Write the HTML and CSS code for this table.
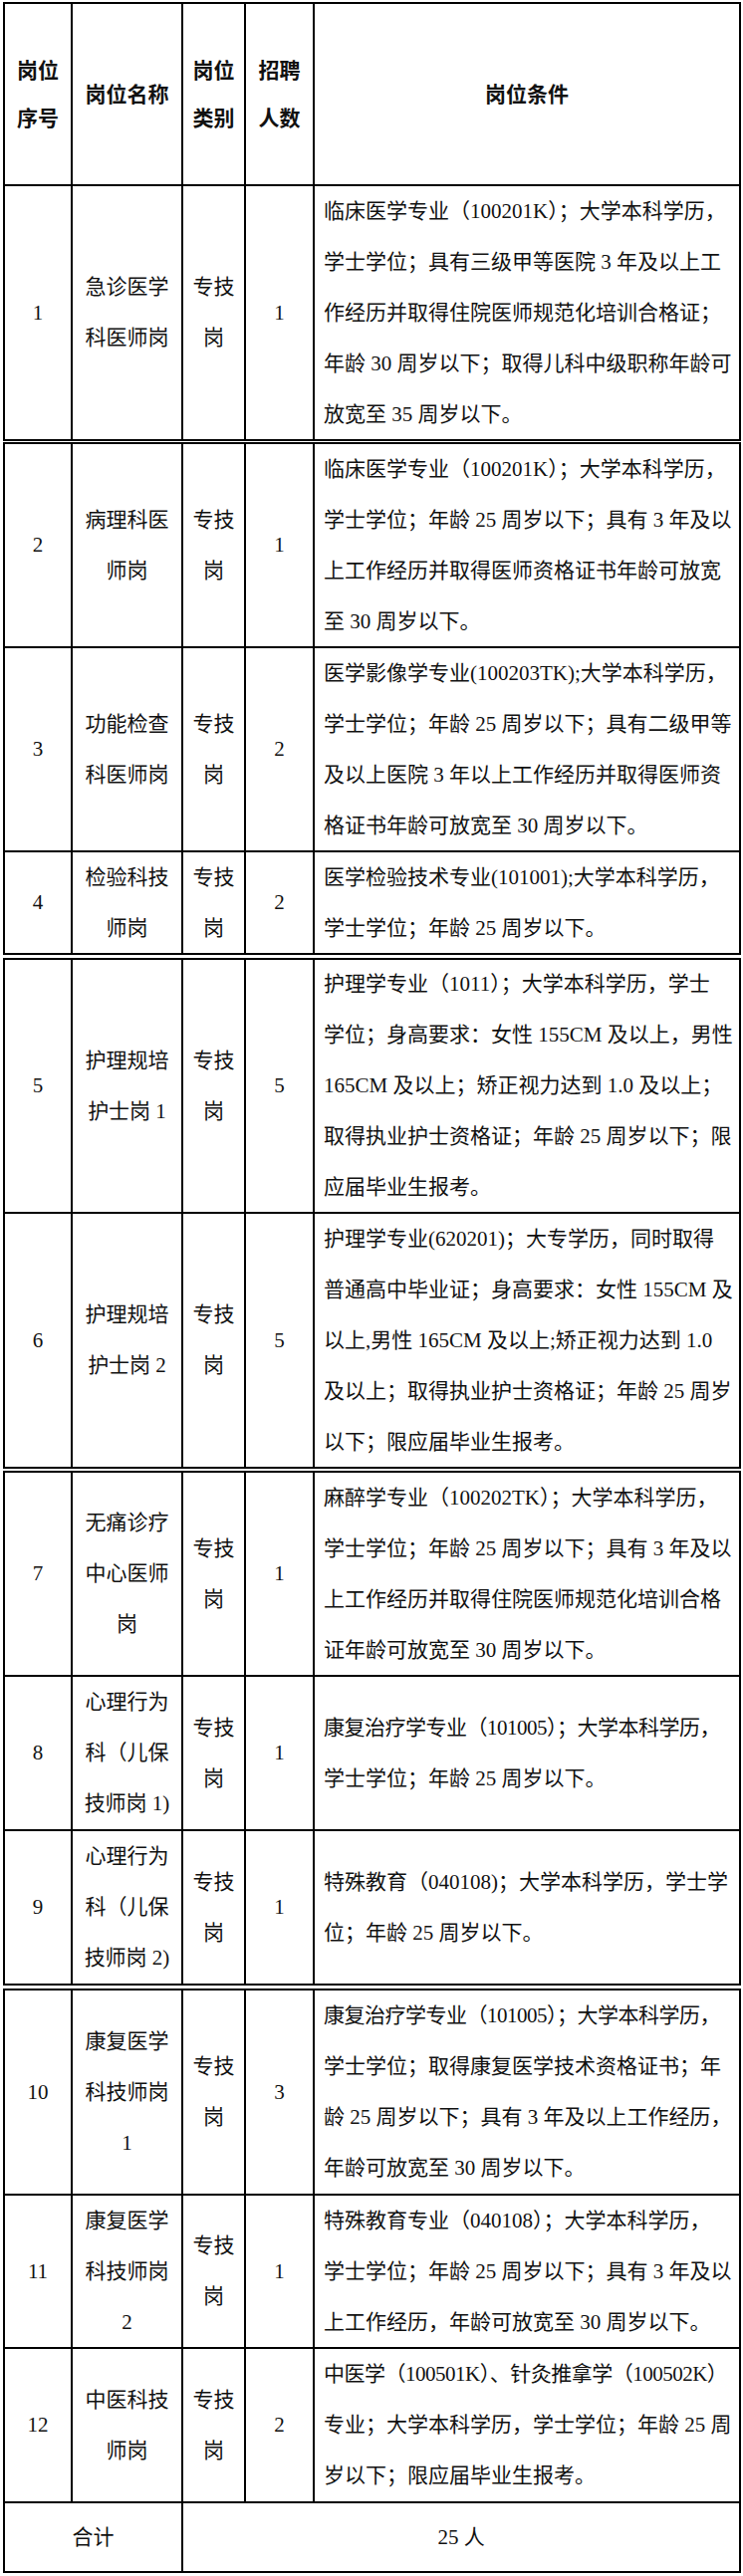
FILE: index.html
```html
<!DOCTYPE html>
<html lang="zh-CN">
<head>
<meta charset="utf-8">
<title>岗位表</title>
<link rel="stylesheet" href="styles.css">
</head>
<body>
<div class="sheet">

  <div class="seg seg-a">
    <div class="hd"><span>岗位</span><span>序号</span></div>
    <div class="hd"><span>岗位名称</span></div>
    <div class="hd"><span>岗位</span><span>类别</span></div>
    <div class="hd"><span>招聘</span><span>人数</span></div>
    <div class="hd"><span>岗位条件</span></div>

    <div><span>1</span></div>
    <div><span>急诊医学</span><span>科医师岗</span></div>
    <div><span>专技</span><span>岗</span></div>
    <div><span>1</span></div>
    <div class="cond">
      <span>临床医学专业（100201K）；大学本科学历，</span>
      <span>学士学位；具有三级甲等医院 3 年及以上工</span>
      <span>作经历并取得住院医师规范化培训合格证；</span>
      <span>年龄 30 周岁以下；取得儿科中级职称年龄可</span>
      <span>放宽至 35 周岁以下。</span>
    </div>
  </div>

  <div class="seg seg-b">
    <div><span>2</span></div>
    <div><span>病理科医</span><span>师岗</span></div>
    <div><span>专技</span><span>岗</span></div>
    <div><span>1</span></div>
    <div class="cond">
      <span>临床医学专业（100201K）；大学本科学历，</span>
      <span>学士学位；年龄 25 周岁以下；具有 3 年及以</span>
      <span>上工作经历并取得医师资格证书年龄可放宽</span>
      <span>至 30 周岁以下。</span>
    </div>

    <div><span>3</span></div>
    <div><span>功能检查</span><span>科医师岗</span></div>
    <div><span>专技</span><span>岗</span></div>
    <div><span>2</span></div>
    <div class="cond">
      <span>医学影像学专业(100203TK);大学本科学历，</span>
      <span>学士学位；年龄 25 周岁以下；具有二级甲等</span>
      <span>及以上医院 3 年以上工作经历并取得医师资</span>
      <span>格证书年龄可放宽至 30 周岁以下。</span>
    </div>

    <div><span>4</span></div>
    <div><span>检验科技</span><span>师岗</span></div>
    <div><span>专技</span><span>岗</span></div>
    <div><span>2</span></div>
    <div class="cond">
      <span>医学检验技术专业(101001);大学本科学历，</span>
      <span>学士学位；年龄 25 周岁以下。</span>
    </div>
  </div>

  <div class="seg seg-c">
    <div><span>5</span></div>
    <div><span>护理规培</span><span>护士岗 1</span></div>
    <div><span>专技</span><span>岗</span></div>
    <div><span>5</span></div>
    <div class="cond">
      <span>护理学专业（1011）；大学本科学历，学士</span>
      <span>学位；身高要求：女性 155CM 及以上，男性</span>
      <span>165CM 及以上；矫正视力达到 1.0 及以上；</span>
      <span>取得执业护士资格证；年龄 25 周岁以下；限</span>
      <span>应届毕业生报考。</span>
    </div>

    <div><span>6</span></div>
    <div><span>护理规培</span><span>护士岗 2</span></div>
    <div><span>专技</span><span>岗</span></div>
    <div><span>5</span></div>
    <div class="cond">
      <span>护理学专业(620201)；大专学历，同时取得</span>
      <span>普通高中毕业证；身高要求：女性 155CM 及</span>
      <span>以上,男性 165CM 及以上;矫正视力达到 1.0</span>
      <span>及以上；取得执业护士资格证；年龄 25 周岁</span>
      <span>以下；限应届毕业生报考。</span>
    </div>
  </div>

  <div class="seg seg-d">
    <div><span>7</span></div>
    <div><span>无痛诊疗</span><span>中心医师</span><span>岗</span></div>
    <div><span>专技</span><span>岗</span></div>
    <div><span>1</span></div>
    <div class="cond">
      <span>麻醉学专业（100202TK）；大学本科学历，</span>
      <span>学士学位；年龄 25 周岁以下；具有 3 年及以</span>
      <span>上工作经历并取得住院医师规范化培训合格</span>
      <span>证年龄可放宽至 30 周岁以下。</span>
    </div>

    <div><span>8</span></div>
    <div><span>心理行为</span><span>科（儿保</span><span>技师岗 1)</span></div>
    <div><span>专技</span><span>岗</span></div>
    <div><span>1</span></div>
    <div class="cond">
      <span class="tight">康复治疗学专业（101005）；大学本科学历，</span>
      <span>学士学位；年龄 25 周岁以下。</span>
    </div>

    <div><span>9</span></div>
    <div><span>心理行为</span><span>科（儿保</span><span>技师岗 2)</span></div>
    <div><span>专技</span><span>岗</span></div>
    <div><span>1</span></div>
    <div class="cond">
      <span>特殊教育（040108)；大学本科学历，学士学</span>
      <span>位；年龄 25 周岁以下。</span>
    </div>
  </div>

  <div class="seg seg-e">
    <div><span>10</span></div>
    <div><span>康复医学</span><span>科技师岗</span><span>1</span></div>
    <div><span>专技</span><span>岗</span></div>
    <div><span>3</span></div>
    <div class="cond">
      <span class="tight">康复治疗学专业（101005）；大学本科学历，</span>
      <span>学士学位；取得康复医学技术资格证书；年</span>
      <span>龄 25 周岁以下；具有 3 年及以上工作经历，</span>
      <span>年龄可放宽至 30 周岁以下。</span>
    </div>

    <div><span>11</span></div>
    <div><span>康复医学</span><span>科技师岗</span><span>2</span></div>
    <div><span>专技</span><span>岗</span></div>
    <div><span>1</span></div>
    <div class="cond">
      <span>特殊教育专业（040108）；大学本科学历，</span>
      <span>学士学位；年龄 25 周岁以下；具有 3 年及以</span>
      <span>上工作经历，年龄可放宽至 30 周岁以下。</span>
    </div>

    <div><span>12</span></div>
    <div><span>中医科技</span><span>师岗</span></div>
    <div><span>专技</span><span>岗</span></div>
    <div><span>2</span></div>
    <div class="cond">
      <span class="tight">中医学（100501K）、针灸推拿学（100502K）</span>
      <span>专业；大学本科学历，学士学位；年龄 25 周</span>
      <span>岁以下；限应届毕业生报考。</span>
    </div>

    <div class="span-2"><span>合计</span></div>
    <div class="span-3"><span>25 人</span></div>
  </div>

</div>
</body>
</html>
```

FILE: styles.css
```css
html, body {
  margin: 0;
  padding: 0;
  background: #ffffff;
}

body {
  font-family: "Liberation Serif", "Noto Sans CJK SC", serif;
  font-size: 21px;
  color: #111111;
}

.sheet {
  padding: 2px 0 0 3px;
  display: flex;
  flex-direction: column;
  align-items: flex-start;
}

.seg {
  display: grid;
  grid-template-columns: 68px 111px 63px 69px 428px;
  border-left: 2px solid #000;
  border-top: 2px solid #000;
}

.seg > div {
  border-right: 2px solid #000;
  border-bottom: 2px solid #000;
  display: flex;
  flex-direction: column;
  justify-content: center;
  align-items: center;
  line-height: 51px;
  white-space: nowrap;
  overflow: visible;
}

.seg-a { grid-template-rows: 183px 256px; }
.seg-b { margin-top: 1px; grid-template-rows: 205px 205px 103px; }
.seg-c { margin-top: 3px; grid-template-rows: 255px 256px; }
.seg-d { margin-top: 2px; grid-template-rows: 205px 155px 155px; }
.seg-e { margin-top: 3px; grid-template-rows: 206px 154px 155px 70px; }

.seg > .hd {
  font-weight: bold;
  line-height: 48px;
}

.seg > .cond {
  align-items: flex-start;
  padding-left: 9px;
}

.tight {
  letter-spacing: -0.5px;
}

.seg > .span-2 { grid-column: span 2; }
.seg > .span-3 { grid-column: span 3; }
```
